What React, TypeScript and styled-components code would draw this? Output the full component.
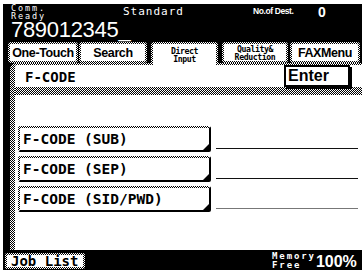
import styled, { createGlobalStyle, css } from "styled-components";

const GlobalStyle = createGlobalStyle`
  html, body { margin: 0; padding: 0; background: #fff; }
  body { font-family: "Liberation Sans", Arial, sans-serif; }
`;

const ditherBorder = css`
  border: 2px solid transparent;
  background: linear-gradient(#fff, #fff) padding-box,
    repeating-conic-gradient(#000 0 25%, #fff 0 50%) 0 0 / 2px 2px border-box;
`;

const mono = `"DejaVu Sans Mono", "Liberation Mono", monospace`;

const Screen = styled.div`
  box-sizing: border-box;
  margin: 4px 0 0 3px;
  width: 359px;
  height: 266px;
  background: #000;
  display: flex;
  flex-direction: column;
  overflow: hidden;
`;

const Header = styled.div`
  height: 38px;
  flex: none;
  padding: 0 0 0 8px;
  box-sizing: border-box;
  color: #fff;
`;

const StatusRow = styled.div`
  display: flex;
  align-items: flex-start;
  height: 16px;
`;

const CommReady = styled.div`
  width: 112px;
  font-family: ${mono};
  font-size: 8.5px;
  line-height: 8px;
  letter-spacing: 1.9px;
`;

const Mode = styled.div`
  width: 130px;
  margin-top: 3px;
  font-family: ${mono};
  font-size: 11px;
  line-height: 9px;
  letter-spacing: 1px;
`;

const DestLabel = styled.div`
  width: 65px;
  margin-top: 3px;
  font-size: 8.5px;
  font-weight: bold;
  line-height: 8px;
  letter-spacing: -0.4px;
`;

const DestCount = styled.div`
  margin-top: 2px;
  font-size: 14px;
  font-weight: bold;
  line-height: 12px;
`;

const Number = styled.div`
  margin-top: 2px;
  font-size: 22px;
  line-height: 16px;
  letter-spacing: -0.3px;
`;

const TabRow = styled.div`
  display: flex;
  align-items: flex-start;
  height: 21px;
  flex: none;
  padding-left: 5px;
  position: relative;
  z-index: 1;
`;

const Tab = styled.div<{ $w: number; $ml: number; $active?: boolean }>`
  ${ditherBorder};
  box-sizing: border-box;
  width: ${(p) => p.$w}px;
  margin-left: ${(p) => p.$ml}px;
  height: ${(p) => (p.$active ? 23 : 21)}px;
  border-radius: 3px 3px ${(p) => (p.$active ? "0 0" : "3px 3px")};
  ${(p) => p.$active && "border-bottom: 0;"}
  display: flex;
  align-items: center;
  justify-content: center;
  font-weight: bold;
  font-size: 12.5px;
  letter-spacing: -0.4px;
  white-space: nowrap;
  color: #000;
  flex: none;
`;

const TabSmall = styled.span`
  font-family: ${mono};
  font-size: 8.2px;
  line-height: 8px;
  text-align: center;
`;

const Panel = styled.div`
  flex: 1;
  margin-left: 7px;
  border-left: 5px solid transparent;
  border-top: 2px solid transparent;
  border-radius: 6px 0 0 0;
  background: linear-gradient(#fff, #fff) padding-box,
    repeating-conic-gradient(#000 0 25%, #fff 0 50%) 0 0 / 2px 2px border-box;
  display: flex;
  flex-direction: column;
`;

const PanelHead = styled.div`
  height: 22px;
  display: flex;
  align-items: flex-start;
  padding: 0 12px 0 10px;
  position: relative;
  z-index: 1;
`;

const PanelTitle = styled.div`
  margin-top: 5px;
  font-family: ${mono};
  font-weight: bold;
  font-size: 14px;
  line-height: 14px;
`;

const EnterButton = styled.div`
  margin-left: auto;
  box-sizing: border-box;
  width: 66px;
  height: 22px;
  border: 2px solid #000;
  box-shadow: 2px 2px 0 #000;
  background: #fff;
  font-weight: bold;
  font-size: 16px;
  line-height: 18px;
  padding-left: 2px;
`;

const Band = styled.div`
  height: 8px;
  background: repeating-conic-gradient(#000 0 25%, #fff 0 50%) 0 0 / 2px 2px;
`;

const Options = styled.div`
  display: flex;
  flex-direction: column;
  gap: 4px;
  padding: 31px 4px 0 3px;
`;

const OptionRow = styled.div`
  display: flex;
  align-items: flex-end;
`;

const OptionButton = styled.div`
  ${ditherBorder};
  border-right-color: #000;
  border-bottom-color: #000;
  border-radius: 2px;
  position: relative;
  box-sizing: border-box;
  width: 193px;
  height: 26px;
  padding-left: 3px;
  font-family: ${mono};
  font-weight: bold;
  font-size: 14.5px;
  line-height: 22px;

  &::after {
    content: "";
    position: absolute;
    right: 0;
    bottom: 0;
    border-left: 6px solid transparent;
    border-bottom: 6px solid #000;
  }
`;

const ValueLine = styled.div<{ $color: string }>`
  flex: 1;
  height: 1px;
  margin: 0 0 3px 5px;
  background: ${(p) => p.$color};
`;

const Footer = styled.div`
  height: 20px;
  flex: none;
  display: flex;
  align-items: flex-start;
  color: #fff;
`;

const JobList = styled.div`
  ${ditherBorder};
  border-radius: 2px;
  box-sizing: border-box;
  width: 80px;
  height: 16px;
  margin: 3px 0 0 2px;
  padding-left: 4px;
  color: #000;
  font-family: ${mono};
  font-weight: bold;
  font-size: 14px;
  line-height: 12px;
`;

const MemoryLabel = styled.div`
  margin: 2px 0 0 187px;
  font-family: ${mono};
  font-weight: bold;
  font-size: 9px;
  line-height: 9px;
  letter-spacing: 1.9px;
`;

const MemoryValue = styled.div`
  margin: 5px 0 0 0;
  font-size: 16px;
  font-weight: bold;
  line-height: 13px;
`;

const options = [
  { label: "F-CODE (SUB)", line: "#111" },
  { label: "F-CODE (SEP)", line: "#111" },
  { label: "F-CODE (SID/PWD)", line: "#777" },
];

export default function App() {
  return (
    <>
      <GlobalStyle />
      <Screen>
        <Header>
          <StatusRow>
            <CommReady>
              Comm.
              <br />
              Ready
            </CommReady>
            <Mode>Standard</Mode>
            <DestLabel>No.of Dest.</DestLabel>
            <DestCount>0</DestCount>
          </StatusRow>
          <Number>789012345_</Number>
        </Header>
        <TabRow>
          <Tab $w={70} $ml={0}>One-Touch</Tab>
          <Tab $w={68} $ml={1}>Search</Tab>
          <Tab $w={67} $ml={4} $active>
            <TabSmall>
              Direct
              <br />
              Input
            </TabSmall>
          </Tab>
          <Tab $w={66} $ml={4}>
            <TabSmall>
              Quality&amp;
              <br />
              Reduction
            </TabSmall>
          </Tab>
          <Tab $w={70} $ml={2}>FAXMenu</Tab>
        </TabRow>
        <Panel>
          <PanelHead>
            <PanelTitle>F-CODE</PanelTitle>
            <EnterButton>Enter</EnterButton>
          </PanelHead>
          <Band />
          <Options>
            {options.map((o) => (
              <OptionRow key={o.label}>
                <OptionButton>{o.label}</OptionButton>
                <ValueLine $color={o.line} />
              </OptionRow>
            ))}
          </Options>
        </Panel>
        <Footer>
          <JobList>Job List</JobList>
          <MemoryLabel>
            Memory
            <br />
            Free
          </MemoryLabel>
          <MemoryValue>100%</MemoryValue>
        </Footer>
      </Screen>
    </>
  );
}
